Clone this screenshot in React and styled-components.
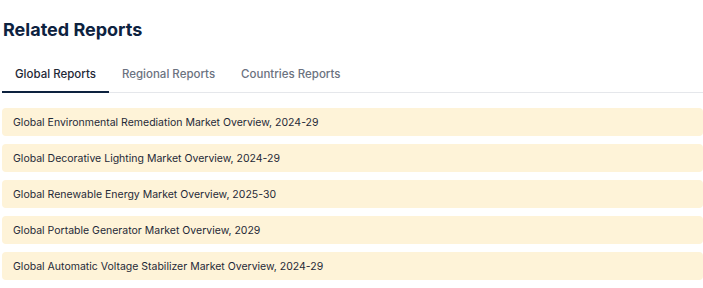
import React from 'react';
import styled, { createGlobalStyle } from 'styled-components';

const GlobalStyle = createGlobalStyle`
    body {
        margin: 0;
        background: #ffffff;
        font-family: Inter, "Liberation Sans", sans-serif;
    }
`;

const Wrapper = styled.section`
    padding: 18px 0 0 2px;
    width: 701px;
`;

const Title = styled.h2`
    margin: 0 0 0 1px;
    font-size: 18px;
    font-weight: 700;
    line-height: 24px;
    color: #0d223f;
`;

const TabBar = styled.div`
    display: flex;
    margin-top: 24px;
    border-bottom: 1px solid #e5e7eb;
`;

const Tab = styled.button`
    border: 0;
    background: none;
    padding: 0 13px 9px;
    margin-bottom: -1px;
    font-family: inherit;
    font-size: 11.5px;
    font-weight: 500;
    line-height: 16px;
    color: ${(p) => (p.$active ? '#1f2937' : '#6b7280')};
    border-bottom: 2px solid ${(p) => (p.$active ? '#0d223f' : 'transparent')};
    cursor: pointer;
`;

const List = styled.ul`
    list-style: none;
    margin: 15px 0 0;
    padding: 0;
    display: flex;
    flex-direction: column;
    gap: 8px;
`;

const Item = styled.li`
    height: 28px;
    display: flex;
    align-items: center;
    padding: 0 11px;
    background: #fef3d8;
    border-radius: 4px;
    font-size: 10.5px;
    color: #1f2937;
`;

const tabs = ['Global Reports', 'Regional Reports', 'Countries Reports'];

const reports = [
    'Global Environmental Remediation Market Overview, 2024-29',
    'Global Decorative Lighting Market Overview, 2024-29',
    'Global Renewable Energy Market Overview, 2025-30',
    'Global Portable Generator Market Overview, 2029',
    'Global Automatic Voltage Stabilizer Market Overview, 2024-29',
];

export default function App() {
    const [active, setActive] = React.useState(0);

    return (
        <>
            <GlobalStyle />
            <Wrapper>
                <Title>Related Reports</Title>
                <TabBar>
                    {tabs.map((t, i) => (
                        <Tab key={t} $active={i === active} onClick={() => setActive(i)}>
                            {t}
                        </Tab>
                    ))}
                </TabBar>
                <List>
                    {reports.map((r) => (
                        <Item key={r}>{r}</Item>
                    ))}
                </List>
            </Wrapper>
        </>
    );
}
